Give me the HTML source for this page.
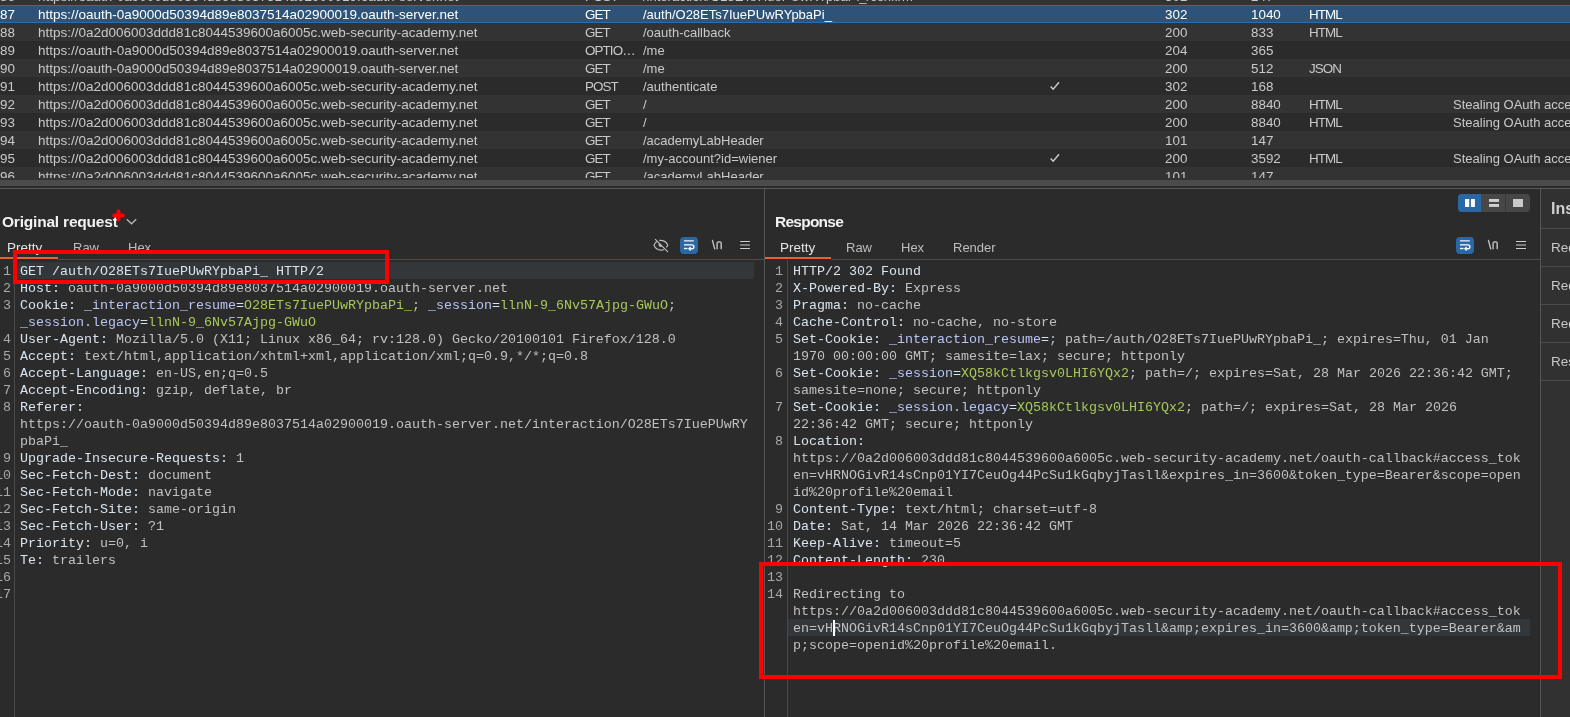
<!DOCTYPE html>
<html><head><meta charset="utf-8">
<style>
*{margin:0;padding:0;box-sizing:border-box}
html,body{width:1570px;height:717px;overflow:hidden;background:#2b2b2b}
body{position:relative;font-family:"Liberation Sans",sans-serif;color:#c8c8c8}
#tbl{position:absolute;left:0;top:0;width:1570px;height:180px;overflow:hidden}
.row{position:absolute;left:0;width:1570px;height:18px;font-size:13.4px;line-height:18px;white-space:nowrap;color:#c9c9c9}
.row.l{background:#333333}
.row.d{background:#2b2b2b}
.row.sel{background:#2d5478;border-top:1px solid #2f6cae;border-bottom:1px solid #2f6cae;color:#ffffff;line-height:18px}
.row.sel span{top:0}
.row span{position:absolute;top:1px}
.c2,.c7{letter-spacing:-0.9px}
.c3{font-size:13px}
.c1{font-size:13.5px}
.c8{font-size:13px}
.c0{left:0}.c1{left:38px}.c2{left:585px}.c3{left:643px}.c4{left:1049px}.c5{left:1165px}.c6{left:1251px}.c7{left:1309px}.c8{left:1453px}
#hscroll{position:absolute;left:0;top:180px;width:1570px;height:6px;background:#4a4b4c}
#hline{position:absolute;left:0;top:188px;width:1570px;height:1px;background:#5a5a5a}
.vdiv{position:absolute;width:1px;background:#555}
.hdr{position:absolute;font-weight:bold;font-size:14.5px;color:#f2f2f2;line-height:18px;white-space:nowrap}
.tab{position:absolute;font-size:13.5px;color:#bdbdbd;line-height:16px;white-space:nowrap}
.ul{position:absolute;height:2px;background:#e8642c}
.tline{position:absolute;height:1px;background:#4d4d4d}
.ed{position:absolute;font-family:"Liberation Mono",monospace;font-size:13.33px;line-height:17px;white-space:pre;color:#c4c4c4}
.ln{position:absolute;font-family:"Liberation Mono",monospace;font-size:13.33px;line-height:17px;white-space:pre;color:#a8a8a8;text-align:right}
.k{color:#d8e3ee}
.v{color:#c0c0c0}
.p{color:#d8e3ee}
.eq{color:#d8e3ee}
.cn{color:#b8c4f4}
.cv{color:#a8c858}
.hl{position:absolute;background:#33373a}
.redbox{position:absolute;border:4.5px solid #ff0000;z-index:10}

.grp{position:absolute;left:1458px;top:194px;width:72px;height:18px;border-radius:4px;background:#474747;overflow:hidden}
.grp .b1{position:absolute;left:0;top:0;width:23px;height:18px;background:#2a67a5}
.grp .sep{position:absolute;left:47px;top:0;width:1px;height:18px;background:#3a3a3a}
.wbtn{position:absolute;width:18px;height:17px;border-radius:4px;background:#2a67a5}
.insp{position:absolute;left:1541px;top:189px;width:29px;height:528px;background:#313131}
.ihd{position:absolute;left:1551px;font-size:16px;font-weight:bold;color:#d0d0d0;white-space:nowrap;line-height:18px}
.irow{position:absolute;left:1551px;font-size:13.5px;color:#c8c8c8;white-space:nowrap;line-height:16px}
.iline{position:absolute;left:1541px;width:29px;height:1px;background:#4a4a4a}

#wrap{position:absolute;left:0;top:0;width:1570px;height:717px;will-change:transform}

</style></head><body>
<div id="wrap">
<div id="tbl">
<div class="row l" style="top:-13px"><span class="c0">86</span><span class="c1">https://oauth-0a9000d50394d89e8037514a02900019.oauth-server.net</span><span class="c2">POST</span><span class="c3">/interaction/O28ETs7IuePUwRYpbaPi_/confirm</span><span class="c5">302</span><span class="c6">247</span></div>
<div class="row sel" style="top:5px"><span class="c0">87</span><span class="c1">https://oauth-0a9000d50394d89e8037514a02900019.oauth-server.net</span><span class="c2">GET</span><span class="c3">/auth/O28ETs7IuePUwRYpbaPi_</span><span class="c5">302</span><span class="c6">1040</span><span class="c7">HTML</span></div>
<div class="row l" style="top:23px"><span class="c0">88</span><span class="c1">https://0a2d006003ddd81c8044539600a6005c.web-security-academy.net</span><span class="c2">GET</span><span class="c3">/oauth-callback</span><span class="c5">200</span><span class="c6">833</span><span class="c7">HTML</span></div>
<div class="row d" style="top:41px"><span class="c0">89</span><span class="c1">https://oauth-0a9000d50394d89e8037514a02900019.oauth-server.net</span><span class="c2">OPTIO…</span><span class="c3">/me</span><span class="c5">204</span><span class="c6">365</span></div>
<div class="row l" style="top:59px"><span class="c0">90</span><span class="c1">https://oauth-0a9000d50394d89e8037514a02900019.oauth-server.net</span><span class="c2">GET</span><span class="c3">/me</span><span class="c5">200</span><span class="c6">512</span><span class="c7">JSON</span></div>
<div class="row d" style="top:77px"><span class="c0">91</span><span class="c1">https://0a2d006003ddd81c8044539600a6005c.web-security-academy.net</span><span class="c2">POST</span><span class="c3">/authenticate</span><svg style="position:absolute;left:1045px;top:0" width="20" height="18" viewBox="1045 0 20 18"><path d="M1050.6 9.4 L1053.2 12.2 L1059.0 5.2" stroke="#c8c8c8" stroke-width="1.5" fill="none"/></svg><span class="c5">302</span><span class="c6">168</span></div>
<div class="row l" style="top:95px"><span class="c0">92</span><span class="c1">https://0a2d006003ddd81c8044539600a6005c.web-security-academy.net</span><span class="c2">GET</span><span class="c3">/</span><span class="c5">200</span><span class="c6">8840</span><span class="c7">HTML</span><span class="c8">Stealing OAuth access token via an open redirect</span></div>
<div class="row d" style="top:113px"><span class="c0">93</span><span class="c1">https://0a2d006003ddd81c8044539600a6005c.web-security-academy.net</span><span class="c2">GET</span><span class="c3">/</span><span class="c5">200</span><span class="c6">8840</span><span class="c7">HTML</span><span class="c8">Stealing OAuth access token via an open redirect</span></div>
<div class="row l" style="top:131px"><span class="c0">94</span><span class="c1">https://0a2d006003ddd81c8044539600a6005c.web-security-academy.net</span><span class="c2">GET</span><span class="c3">/academyLabHeader</span><span class="c5">101</span><span class="c6">147</span></div>
<div class="row d" style="top:149px"><span class="c0">95</span><span class="c1">https://0a2d006003ddd81c8044539600a6005c.web-security-academy.net</span><span class="c2">GET</span><span class="c3">/my-account?id=wiener</span><svg style="position:absolute;left:1045px;top:0" width="20" height="18" viewBox="1045 0 20 18"><path d="M1050.6 9.4 L1053.2 12.2 L1059.0 5.2" stroke="#c8c8c8" stroke-width="1.5" fill="none"/></svg><span class="c5">200</span><span class="c6">3592</span><span class="c7">HTML</span><span class="c8">Stealing OAuth access token via an open redirect</span></div>
<div class="row l" style="top:167px"><span class="c0">96</span><span class="c1">https://0a2d006003ddd81c8044539600a6005c.web-security-academy.net</span><span class="c2">GET</span><span class="c3">/academyLabHeader</span><span class="c5">101</span><span class="c6">147</span></div>
</div>
<div style="position:absolute;left:0;top:178px;width:1570px;height:2px;background:#333333"></div>
<div id="hscroll"></div>
<div id="hline"></div>
<!-- request panel -->
<div class="hdr" style="left:2px;top:212.5px;font-size:15.5px;letter-spacing:-0.2px">Original request</div>
<div class="tab" style="left:7px;top:240px;color:#e4e4e4">Pretty</div>
<div class="tab" style="left:73px;top:240px;font-size:13px">Raw</div>
<div class="tab" style="left:128px;top:240px;font-size:13px">Hex</div>
<div class="ul" style="left:0;top:257px;width:58px"></div>
<div class="tline" style="left:58px;top:259px;width:706px"></div>
<div class="vdiv" style="left:14px;top:260px;height:457px;background:#4a4a4a"></div>
<div class="hl" style="left:15px;top:262px;width:739px;height:17px"></div>
<div class="ln" style="top:263px;right:1559px">1</div>
<div class="ln" style="top:280px;right:1559px">2</div>
<div class="ln" style="top:297px;right:1559px">3</div>
<div class="ln" style="top:331px;right:1559px">4</div>
<div class="ln" style="top:348px;right:1559px">5</div>
<div class="ln" style="top:365px;right:1559px">6</div>
<div class="ln" style="top:382px;right:1559px">7</div>
<div class="ln" style="top:399px;right:1559px">8</div>
<div class="ln" style="top:450px;right:1559px">9</div>
<div class="ln" style="top:467px;right:1559px">10</div>
<div class="ln" style="top:484px;right:1559px">11</div>
<div class="ln" style="top:501px;right:1559px">12</div>
<div class="ln" style="top:518px;right:1559px">13</div>
<div class="ln" style="top:535px;right:1559px">14</div>
<div class="ln" style="top:552px;right:1559px">15</div>
<div class="ln" style="top:569px;right:1559px">16</div>
<div class="ln" style="top:586px;right:1559px">17</div>
<div class="ed" style="top:263px;left:20px"><span class="p">GET /auth/O28ETs7IuePUwRYpbaPi_ HTTP/2</span></div>
<div class="ed" style="top:280px;left:20px"><span class="k">Host:</span><span class="v"> oauth-0a9000d50394d89e8037514a02900019.oauth-server.net</span></div>
<div class="ed" style="top:297px;left:20px"><span class="k">Cookie:</span><span class="v"> </span><span class="cn">_interaction_resume</span><span class="eq">=</span><span class="cv">O28ETs7IuePUwRYpbaPi_</span><span class="v">; </span><span class="cn">_session</span><span class="eq">=</span><span class="cv">llnN-9_6Nv57Ajpg-GWuO</span><span class="v">;</span></div>
<div class="ed" style="top:314px;left:20px"><span class="cn">_session.legacy</span><span class="eq">=</span><span class="cv">llnN-9_6Nv57Ajpg-GWuO</span></div>
<div class="ed" style="top:331px;left:20px"><span class="k">User-Agent:</span><span class="v"> Mozilla/5.0 (X11; Linux x86_64; rv:128.0) Gecko/20100101 Firefox/128.0</span></div>
<div class="ed" style="top:348px;left:20px"><span class="k">Accept:</span><span class="v"> text/html,application/xhtml+xml,application/xml;q=0.9,*/*;q=0.8</span></div>
<div class="ed" style="top:365px;left:20px"><span class="k">Accept-Language:</span><span class="v"> en-US,en;q=0.5</span></div>
<div class="ed" style="top:382px;left:20px"><span class="k">Accept-Encoding:</span><span class="v"> gzip, deflate, br</span></div>
<div class="ed" style="top:399px;left:20px"><span class="k">Referer:</span></div>
<div class="ed" style="top:416px;left:20px"><span class="v">https://oauth-0a9000d50394d89e8037514a02900019.oauth-server.net/interaction/O28ETs7IuePUwRY</span></div>
<div class="ed" style="top:433px;left:20px"><span class="v">pbaPi_</span></div>
<div class="ed" style="top:450px;left:20px"><span class="k">Upgrade-Insecure-Requests:</span><span class="v"> 1</span></div>
<div class="ed" style="top:467px;left:20px"><span class="k">Sec-Fetch-Dest:</span><span class="v"> document</span></div>
<div class="ed" style="top:484px;left:20px"><span class="k">Sec-Fetch-Mode:</span><span class="v"> navigate</span></div>
<div class="ed" style="top:501px;left:20px"><span class="k">Sec-Fetch-Site:</span><span class="v"> same-origin</span></div>
<div class="ed" style="top:518px;left:20px"><span class="k">Sec-Fetch-User:</span><span class="v"> ?1</span></div>
<div class="ed" style="top:535px;left:20px"><span class="k">Priority:</span><span class="v"> u=0, i</span></div>
<div class="ed" style="top:552px;left:20px"><span class="k">Te:</span><span class="v"> trailers</span></div>
<div class="redbox" style="left:13px;top:250px;width:376px;height:33.5px"></div>

<!-- red plus marker + chevron -->
<svg style="position:absolute;left:110px;top:207px" width="30" height="20" viewBox="110 207 30 20">
<path d="M118.5 211.6 V219.5 M114.3 215.4 H122.8" stroke="#ff0000" stroke-width="4" stroke-linecap="round" fill="none"/>
<path d="M126.8 219.2 L131.5 223.8 L136.2 219.2" stroke="#b8b8b8" stroke-width="1.3" fill="none"/>
</svg>
<!-- request editor icons -->
<svg style="position:absolute;left:650px;top:234px" width="110" height="22" viewBox="650 234 110 22">
<path d="M659.3 240.4 C663.5 240.2 666.8 242.4 667.8 245.3 C667.4 246.2 666.8 246.9 666.1 247.4" stroke="#bdbdbd" stroke-width="1.15" fill="none"/>
<path d="M656.8 241.5 C655.3 242.6 654.4 243.9 654 245.3 C655.2 248.3 658 250.1 661 250.1 C662.2 250.1 663.2 249.9 664.1 249.5" stroke="#bdbdbd" stroke-width="1.15" fill="none"/>
<path d="M659.1 243.2 A2.1 2.1 0 0 0 662.1 246.2 Z" fill="#bdbdbd"/>
<path d="M655.3 239.3 L667.6 251.6" stroke="#bdbdbd" stroke-width="1.2" stroke-linecap="round"/>
<rect x="680" y="237" width="18" height="17" rx="4" fill="#2a67a5"/>
<path d="M684 240.8 H693.8" stroke="#c5d3e6" stroke-width="1.6"/>
<path d="M684 244.9 H692 A1.9 1.9 0 0 1 692 248.7 H689.5" stroke="#ffffff" stroke-width="1.4" fill="none"/>
<path d="M690.6 246.9 L688.8 248.7 L690.6 250.5" stroke="#ffffff" stroke-width="1.2" fill="none"/>
<path d="M684 248.5 H687.5" stroke="#ffffff" stroke-width="1.4"/>
<path d="M712.5 240.5 L714.7 248.9" stroke="#bdbdbd" stroke-width="1.4" stroke-linecap="round"/>
<path d="M717.1 249.3 V243.6 C717.1 242.3 718.2 241.7 719.2 241.7 C720.3 241.7 721.2 242.4 721.2 243.6 V249.3" stroke="#b0b0b0" stroke-width="1.6" fill="none"/>
<path d="M740.2 241.5 H749.9 M740.2 248.5 H749.9" stroke="#cfcfcf" stroke-width="1.1"/><path d="M740.2 245 H749.9" stroke="#bdbdbd" stroke-width="1.1"/>
</svg>
<div class="vdiv" style="left:764px;top:189px;height:528px"></div>
<!-- response panel -->
<div class="hdr" style="left:775px;top:212.5px;font-size:15.5px;letter-spacing:-0.75px">Response</div>
<div class="tab" style="left:780px;top:240px;color:#e4e4e4">Pretty</div>
<div class="tab" style="left:846px;top:240px;font-size:13px">Raw</div>
<div class="tab" style="left:901px;top:240px;font-size:13px">Hex</div>
<div class="tab" style="left:953px;top:240px;font-size:13px">Render</div>
<div class="ul" style="left:765px;top:257px;width:66px"></div>
<div class="tline" style="left:831px;top:259px;width:709px"></div>
<div class="vdiv" style="left:787px;top:260px;height:457px;background:#4a4a4a"></div>
<div class="hl" style="left:788px;top:619px;width:742px;height:17px"></div>
<div class="ln" style="top:263px;right:787px">1</div>
<div class="ln" style="top:280px;right:787px">2</div>
<div class="ln" style="top:297px;right:787px">3</div>
<div class="ln" style="top:314px;right:787px">4</div>
<div class="ln" style="top:331px;right:787px">5</div>
<div class="ln" style="top:365px;right:787px">6</div>
<div class="ln" style="top:399px;right:787px">7</div>
<div class="ln" style="top:433px;right:787px">8</div>
<div class="ln" style="top:501px;right:787px">9</div>
<div class="ln" style="top:518px;right:787px">10</div>
<div class="ln" style="top:535px;right:787px">11</div>
<div class="ln" style="top:552px;right:787px">12</div>
<div class="ln" style="top:569px;right:787px">13</div>
<div class="ln" style="top:586px;right:787px">14</div>
<div class="ed" style="top:263px;left:793px"><span class="k">HTTP/2 302 Found</span></div>
<div class="ed" style="top:280px;left:793px"><span class="k">X-Powered-By:</span><span class="v"> Express</span></div>
<div class="ed" style="top:297px;left:793px"><span class="k">Pragma:</span><span class="v"> no-cache</span></div>
<div class="ed" style="top:314px;left:793px"><span class="k">Cache-Control:</span><span class="v"> no-cache, no-store</span></div>
<div class="ed" style="top:331px;left:793px"><span class="k">Set-Cookie:</span><span class="v"> </span><span class="cn">_interaction_resume</span><span class="eq">=</span><span class="v">; path=/auth/O28ETs7IuePUwRYpbaPi_; expires=Thu, 01 Jan</span></div>
<div class="ed" style="top:348px;left:793px"><span class="v">1970 00:00:00 GMT; samesite=lax; secure; httponly</span></div>
<div class="ed" style="top:365px;left:793px"><span class="k">Set-Cookie:</span><span class="v"> </span><span class="cn">_session</span><span class="eq">=</span><span class="cv">XQ58kCtlkgsv0LHI6YQx2</span><span class="v">; path=/; expires=Sat, 28 Mar 2026 22:36:42 GMT;</span></div>
<div class="ed" style="top:382px;left:793px"><span class="v">samesite=none; secure; httponly</span></div>
<div class="ed" style="top:399px;left:793px"><span class="k">Set-Cookie:</span><span class="v"> </span><span class="cn">_session.legacy</span><span class="eq">=</span><span class="cv">XQ58kCtlkgsv0LHI6YQx2</span><span class="v">; path=/; expires=Sat, 28 Mar 2026</span></div>
<div class="ed" style="top:416px;left:793px"><span class="v">22:36:42 GMT; secure; httponly</span></div>
<div class="ed" style="top:433px;left:793px"><span class="k">Location:</span></div>
<div class="ed" style="top:450px;left:793px"><span class="v">https://0a2d006003ddd81c8044539600a6005c.web-security-academy.net/oauth-callback#access_tok</span></div>
<div class="ed" style="top:467px;left:793px"><span class="v">en=vHRNOGivR14sCnp01YI7CeuOg44PcSu1kGqbyjTasll&amp;expires_in=3600&amp;token_type=Bearer&amp;scope=open</span></div>
<div class="ed" style="top:484px;left:793px"><span class="v">id%20profile%20email</span></div>
<div class="ed" style="top:501px;left:793px"><span class="k">Content-Type:</span><span class="v"> text/html; charset=utf-8</span></div>
<div class="ed" style="top:518px;left:793px"><span class="k">Date:</span><span class="v"> Sat, 14 Mar 2026 22:36:42 GMT</span></div>
<div class="ed" style="top:535px;left:793px"><span class="k">Keep-Alive:</span><span class="v"> timeout=5</span></div>
<div class="ed" style="top:552px;left:793px"><span class="k">Content-Length:</span><span class="v"> 230</span></div>
<div class="ed" style="top:586px;left:793px"><span class="v">Redirecting to</span></div>
<div class="ed" style="top:603px;left:793px"><span class="v">https://0a2d006003ddd81c8044539600a6005c.web-security-academy.net/oauth-callback#access_tok</span></div>
<div class="ed" style="top:620px;left:793px"><span class="v">en=vHRNOGivR14sCnp01YI7CeuOg44PcSu1kGqbyjTasll&amp;amp;expires_in=3600&amp;amp;token_type=Bearer&amp;am</span></div>
<div class="ed" style="top:637px;left:793px"><span class="v">p;scope=openid%20profile%20email.</span></div>
<div class="redbox" style="left:759px;top:562px;width:803px;height:117px"></div>
<div class="vdiv" style="left:1540px;top:189px;height:528px"></div>
<!-- layout toggles -->
<div class="grp"><div class="b1"></div><div class="sep"></div></div>
<svg style="position:absolute;left:1455px;top:190px" width="80" height="25" viewBox="1455 190 80 25">
<rect x="1465" y="199" width="4.2" height="8" fill="#ffffff"/>
<rect x="1470.9" y="199" width="4" height="8" fill="#ffffff"/>
<rect x="1489" y="199" width="10" height="2.9" fill="#d0d0d0"/>
<rect x="1489" y="204" width="10" height="2.9" fill="#d0d0d0"/>
<rect x="1513" y="199" width="10" height="8" fill="#cacaca"/>
</svg>
<!-- response editor icons -->
<svg style="position:absolute;left:1450px;top:234px" width="90" height="22" viewBox="1450 234 90 22">
<rect x="1456" y="237" width="18" height="17" rx="4" fill="#2a67a5"/>
<path d="M1460 240.8 H1469.8" stroke="#c5d3e6" stroke-width="1.6"/>
<path d="M1460 244.9 H1468 A1.9 1.9 0 0 1 1468 248.7 H1465.5" stroke="#ffffff" stroke-width="1.4" fill="none"/>
<path d="M1466.6 246.9 L1464.8 248.7 L1466.6 250.5" stroke="#ffffff" stroke-width="1.2" fill="none"/>
<path d="M1460 248.5 H1463.5" stroke="#ffffff" stroke-width="1.4"/>
<path d="M1488.5 240.5 L1490.7 248.9" stroke="#bdbdbd" stroke-width="1.4" stroke-linecap="round"/>
<path d="M1493.1 249.3 V243.6 C1493.1 242.3 1494.2 241.7 1495.2 241.7 C1496.3 241.7 1497.2 242.4 1497.2 243.6 V249.3" stroke="#b0b0b0" stroke-width="1.6" fill="none"/>
<path d="M1516 241.5 H1526 M1516 248.5 H1526" stroke="#cfcfcf" stroke-width="1.1"/><path d="M1516 245 H1526" stroke="#bdbdbd" stroke-width="1.1"/>
</svg>
<!-- inspector -->
<div class="insp"></div>
<div class="ihd" style="top:200px">Inspector</div>
<div class="iline" style="top:228px"></div>
<div class="irow" style="top:240px">Request attributes</div>
<div class="iline" style="top:266px"></div>
<div class="irow" style="top:278px">Request query parameters</div>
<div class="iline" style="top:304px"></div>
<div class="irow" style="top:316px">Request body parameters</div>
<div class="iline" style="top:342px"></div>
<div class="irow" style="top:354px">Response headers</div>
<div class="iline" style="top:380px"></div>
<!-- caret -->
<div style="position:absolute;left:833px;top:620px;width:2px;height:16px;background:#ffffff"></div>


</div>
</body></html>
